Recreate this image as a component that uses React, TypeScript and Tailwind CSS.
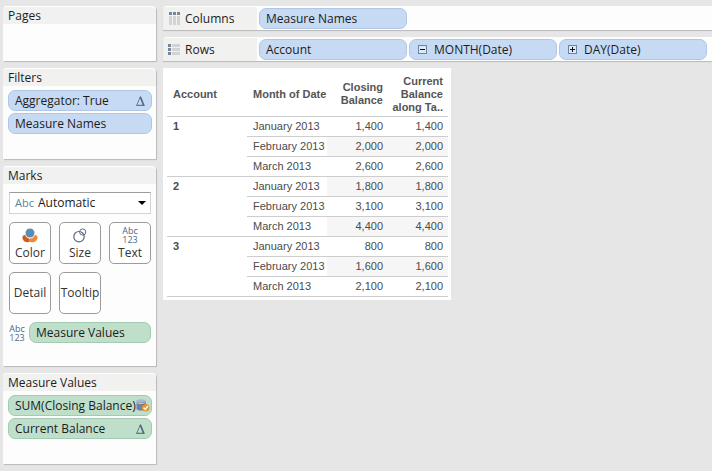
import type { ReactNode } from "react";

type Tone = "blue" | "green";

const tones: Record<Tone, string> = {
  blue: "bg-[#c7daf4] border-[#b0c6e4]",
  green: "bg-[#bfdfcb] border-[#a3cbb3]",
};

function Pill({
  label,
  tone = "blue",
  toggle,
  icon,
  className = "",
}: {
  label: string;
  tone?: Tone;
  toggle?: "plus" | "minus";
  icon?: ReactNode;
  className?: string;
}) {
  return (
    <div
      className={`flex h-[21px] shrink-0 items-center rounded-[7px] border pl-1.5 pr-[3px] ${tones[tone]} ${className}`}
    >
      {toggle && (
        <button
          type="button"
          aria-label={toggle === "plus" ? `Expand ${label}` : `Collapse ${label}`}
          className="ml-0.5 mr-[7px] size-[9px] shrink-0"
        >
          <svg viewBox="0 0 9 9" className="block size-[9px]" shapeRendering="crispEdges">
            <rect x="0.5" y="0.5" width="8" height="8" fill="#dce8f8" stroke="#6d83a3" />
            <path d={toggle === "plus" ? "M2 4.5H7M4.5 2V7" : "M2 4.5H7"} stroke="#111" />
          </svg>
        </button>
      )}
      <button type="button" className="flex-1 whitespace-nowrap text-left leading-4">
        {label}
      </button>
      {icon}
    </div>
  );
}

function Delta() {
  return (
    <svg viewBox="0 0 9 10" className="mr-[3px] h-2.5 w-[9px] shrink-0" fill="none">
      <path d="M0.7 9.4L4.3 0.8" stroke="#5b6f88" strokeWidth="0.9" />
      <path d="M4.3 0.8L7.7 9.2" stroke="#4a5f78" strokeWidth="1.6" />
      <path d="M0.3 9.3H8.7" stroke="#4a5f78" strokeWidth="1" />
    </svg>
  );
}

function DatabaseCheck() {
  return (
    <svg viewBox="0 0 14 13" className="h-[13px] w-3.5 shrink-0">
      <path d="M0.5 2V9.8C0.5 12.2 9.5 12.2 9.5 9.8V2Z" fill="#71819f" />
      <path d="M6.5 3V11.3C8.4 11 9.5 10.6 9.5 9.8V2Z" fill="#566889" />
      <ellipse cx="5" cy="2" rx="4.5" ry="1.7" fill="#a9b8cd" />
      <path d="M0.5 3.4C1.6 4.9 8.4 4.9 9.5 3.4" fill="none" stroke="#dce5ed" strokeWidth="0.8" />
      <circle cx="9.7" cy="8.8" r="3.8" fill="#e8942f" />
      <path d="M7.6 8.8L9.2 10.5L12 7" fill="none" stroke="#fff" strokeWidth="1.3" />
    </svg>
  );
}

function ColorIcon() {
  return (
    <svg viewBox="0 0 16 15" className="h-[15px] w-4">
      <path d="M0.6 8.2C2 6.6 4.5 6.2 6 7.6L8.4 13C6.6 14.6 3.4 14.8 1.8 12.8C0.6 11.5 0.3 9.8 0.6 8.2Z" fill="#d3591c" />
      <path d="M15.4 8.2C14 6.6 11.5 6.2 10 7.6L6.6 12.4C8 14.8 12.4 14.9 14.2 12.8C15.4 11.5 15.7 9.8 15.4 8.2Z" fill="#f08a38" />
      <circle cx="8" cy="5.2" r="5.2" fill="#fff" />
      <circle cx="8" cy="5" r="4.5" fill="#5b8db3" />
    </svg>
  );
}

function SizeIcon() {
  return (
    <svg viewBox="0 0 14 15" className="h-[15px] w-3.5" fill="none" stroke="#5a6b82">
      <circle cx="6" cy="8.7" r="5.2" strokeWidth="1.2" />
      <circle cx="9.7" cy="4" r="3.1" strokeWidth="1" />
    </svg>
  );
}

function AbcNumbers() {
  return (
    <span className="flex w-4 flex-col items-center text-[9px] font-medium leading-[9px] text-[#4d6888]">
      <span>Abc</span>
      <span>123</span>
    </span>
  );
}

function Card({ title, children, className = "" }: { title: string; children?: ReactNode; className?: string }) {
  return (
    <section className={`rounded-t-[4px] bg-[#fdfdfe] shadow-[1px_1px_1px_#b9b9b9] ${className}`}>
      <h2 className="h-[18px] rounded-t-[4px] border-t border-white bg-[#f1f1f0] pl-[5px] leading-[18px]">{title}</h2>
      {children}
    </section>
  );
}

function MarkButton({ label, icon }: { label: string; icon?: ReactNode }) {
  return (
    <button
      type="button"
      className="flex h-[42px] flex-col items-center justify-center rounded-[5px] border border-[#9b9b9b] bg-white text-[#333]"
    >
      {icon && <span className="flex h-5 items-center justify-center">{icon}</span>}
      <span className="leading-4">{label}</span>
    </button>
  );
}

function Shelf({ title, icon, children }: { title: string; icon: ReactNode; children: ReactNode }) {
  return (
    <section className="flex h-6 overflow-hidden rounded-tl-[4px] bg-[#fdfdfe] shadow-[0_1px_1px_#b9b9b9]">
      <h2 className="mr-0.5 flex w-[94px] shrink-0 items-center gap-[5px] border-t border-white bg-[#f1f1f0] pl-[5px]">
        {icon}
        {title}
      </h2>
      <div className="flex items-start gap-0.5 pt-0.5">{children}</div>
    </section>
  );
}

function ColumnsIcon() {
  return (
    <svg viewBox="0 0 12 13" className="h-[13px] w-3" shapeRendering="crispEdges">
      {[1, 5, 9].map((x) => (
        <g key={x}>
          <rect x={x} y="0" width="3" height="3" fill="#78869a" />
          <rect x={x} y="4" width="3" height="9" fill="#d2d3d4" />
        </g>
      ))}
    </svg>
  );
}

function RowsIcon() {
  return (
    <svg viewBox="0 0 12 11" className="h-[11px] w-3" shapeRendering="crispEdges">
      {[0, 4, 8].map((y) => (
        <g key={y}>
          <rect x="0" y={y} width="3" height="3" fill="#78869a" />
          <rect x="4" y={y} width="8" height="3" fill="#d2d3d4" />
        </g>
      ))}
    </svg>
  );
}

const months = ["January 2013", "February 2013", "March 2013"];
const accounts = [
  { id: "1", values: ["1,400", "2,000", "2,600"] },
  { id: "2", values: ["1,800", "3,100", "4,400"] },
  { id: "3", values: ["800", "1,600", "2,100"] },
];

function BalanceTable() {
  const line = "border-b border-[#cdcdcd]";
  return (
    <div className="self-start bg-white pb-[3px] pl-1 pr-[3px]">
      <table className="w-[281px] table-fixed border-separate border-spacing-0 font-['Liberation_Sans',Arial,sans-serif] text-[11px] leading-[13px] text-[#4b4b4b]">
        <colgroup>
          <col className="w-20" />
          <col className="w-20" />
          <col className="w-[60px]" />
          <col />
        </colgroup>
        <thead>
          <tr className="h-[49px] text-[#555]">
            <th scope="col" className={`${line} pl-1.5 pt-1 text-left`}>Account</th>
            <th scope="col" className={`${line} whitespace-nowrap pl-1.5 pt-1 text-left`}>Month of Date</th>
            <th scope="col" className={`${line} pr-1 pt-1 text-right`}>Closing Balance</th>
            <th scope="col" className={`${line} whitespace-nowrap pr-[5px] pt-1 text-right`}>
              Current
              <br />
              Balance
              <br />
              along Ta..
            </th>
          </tr>
        </thead>
        <tbody>
          {accounts.map((account, a) =>
            account.values.map((value, m) => {
              const band = (a * 3 + m) % 2 === 1 ? "bg-[#f6f6f6]" : "";
              return (
                <tr key={account.id + months[m]} className="h-5">
                  {m === 0 && (
                    <th scope="rowgroup" rowSpan={3} className={`${line} pl-1.5 pt-[3px] text-left align-top`}>
                      {account.id}
                    </th>
                  )}
                  <td className={`${line} whitespace-nowrap pl-1.5`}>{months[m]}</td>
                  <td className={`${line} ${band} pr-1 text-right`}>{value}</td>
                  <td className={`${line} ${band} pr-[5px] text-right`}>{value}</td>
                </tr>
              );
            }),
          )}
        </tbody>
      </table>
    </div>
  );
}

export default function App() {
  return (
    <div className="flex min-h-screen gap-[7px] overflow-hidden bg-[#e6e6e6] pl-[3px] pt-1.5 font-['Open_Sans','Segoe_UI',sans-serif] text-[12px] text-[#1c1c1c]">
      <aside className="flex w-[153px] shrink-0 flex-col gap-[7px]">
        <Card title="Pages" className="min-h-[55px]" />
        <Card title="Filters" className="min-h-[91px]">
          <div className="flex flex-col gap-0.5 pl-[5px] pr-1 pt-1">
            <Pill label="Aggregator: True" icon={<Delta />} />
            <Pill label="Measure Names" />
          </div>
        </Card>
        <Card title="Marks" className="min-h-[200px]">
          <div className="pl-1.5 pr-[5px] pt-2">
            <div className="relative flex h-[22px] items-center border border-[#d4d4d4] border-t-[#9c9c9c] bg-white">
              <label htmlFor="mark-type" className="w-[28px] shrink-0 pl-[5px] text-[11px] text-[#5d7f9f]">
                Abc
              </label>
              <select id="mark-type" className="h-5 w-full appearance-none bg-transparent leading-4 outline-none">
                <option>Automatic</option>
              </select>
              <svg viewBox="0 0 8 4" className="pointer-events-none absolute right-1 h-1 w-2">
                <path d="M0 0H8L4 4Z" fill="#000" />
              </svg>
            </div>
            <div className="grid grid-cols-3 gap-2 pt-2">
              <MarkButton label="Color" icon={<ColorIcon />} />
              <MarkButton label="Size" icon={<SizeIcon />} />
              <MarkButton label="Text" icon={<AbcNumbers />} />
              <MarkButton label="Detail" />
              <MarkButton label="Tooltip" />
            </div>
            <div className="flex items-center gap-1 pt-2">
              <AbcNumbers />
              <Pill label="Measure Values" tone="green" className="flex-1" />
            </div>
          </div>
        </Card>
        <Card title="Measure Values" className="min-h-[91px]">
          <div className="flex flex-col gap-0.5 pl-[5px] pr-1 pt-1">
            <Pill label="SUM(Closing Balance)" tone="green" icon={<DatabaseCheck />} />
            <Pill label="Current Balance" tone="green" icon={<Delta />} />
          </div>
        </Card>
      </aside>
      <main className="flex min-w-0 flex-1 flex-col gap-[7px]">
        <Shelf title="Columns" icon={<ColumnsIcon />}>
          <Pill label="Measure Names" className="w-[148px]" />
        </Shelf>
        <Shelf title="Rows" icon={<RowsIcon />}>
          <Pill label="Account" className="w-[148px]" />
          <Pill label="MONTH(Date)" toggle="minus" className="w-[148px]" />
          <Pill label="DAY(Date)" toggle="plus" className="w-[148px]" />
        </Shelf>
        <BalanceTable />
      </main>
    </div>
  );
}
